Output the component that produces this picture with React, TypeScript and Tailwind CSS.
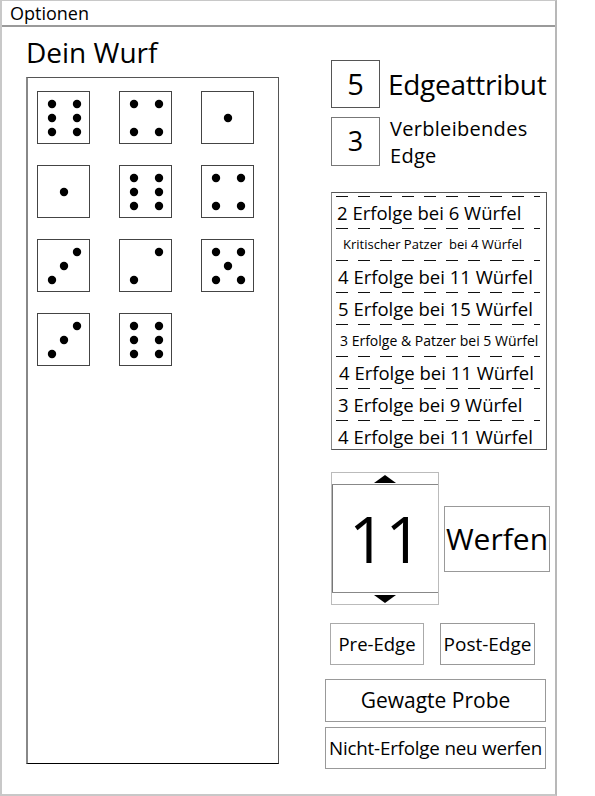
import React from "react";

const FONT = { fontFamily: '"Open Sans", "Noto Sans", sans-serif' };

type Pip = [number, number];

const L = 14;
const M = 26;
const R = 39;
const T = 12;
const B = 40;

const PIPS: Record<number, Pip[]> = {
  1: [[M, M]],
  2: [[L, B], [R, T]],
  3: [[L, B], [M, M], [R, T]],
  4: [[L, T], [R, T], [L, B], [R, B]],
  5: [[L, T], [R, T], [M, M], [L, B], [R, B]],
  6: [[L, T], [R, T], [L, M], [R, M], [L, B], [R, B]],
};

const rolls = [6, 4, 1, 1, 6, 4, 3, 2, 5, 3, 6];

const results = [
  { text: "2 Erfolge bei 6 Würfel", cls: "text-[18.5px] pl-[5px]" },
  { text: "Kritischer Patzer\u00a0 bei 4 Würfel", cls: "text-[13px] pl-[11px]" },
  { text: "4 Erfolge bei 11 Würfel", cls: "text-[18.5px] pl-[6px]" },
  { text: "5 Erfolge bei 15 Würfel", cls: "text-[18.5px] pl-[6px]" },
  { text: "3 Erfolge & Patzer bei 5 Würfel", cls: "text-[14px] pl-[8px]" },
  { text: "4 Erfolge bei 11 Würfel", cls: "text-[18.5px] pl-[7px]" },
  { text: "3 Erfolge bei 9 Würfel", cls: "text-[18.5px] pl-[6px]" },
  { text: "4 Erfolge bei 11 Würfel", cls: "text-[18.5px] pl-[6px]" },
];

function Die({ value }: { value: number }) {
  return (
    <div className="h-[53px] w-[53px] border border-[#444]">
      <svg width="51" height="51" viewBox="0 0 51 51">
        {PIPS[value].map(([x, y], i) => (
          <circle key={i} cx={x} cy={y} r="4.2" fill="#000" />
        ))}
      </svg>
    </div>
  );
}

function Dashes() {
  return (
    <div className="h-px w-full bg-[repeating-linear-gradient(to_right,transparent_0_10px,#111_10px_22px)] bg-[position:-6px_0]" />
  );
}

export default function App() {
  return (
    <div className="bg-white text-black" style={FONT}>
      <div className="flex h-[796px] w-[557px] flex-col border-2 border-t border-[#c8c8c8] border-r-[#b8b8b8]">
        <div className="h-[26px] border-b-2 border-[#9a9a9a] pl-[8px] text-[18px] leading-[25px]">
          Optionen
        </div>

        <div className="flex flex-1">
          <div className="pl-[24px]">
            <div className="mt-[7px] h-[43px] text-[28px] leading-[36px]">Dein Wurf</div>
            <div className="h-[687px] w-[253px] border border-[#555] border-b-black border-l-[#888] border-l-2 pl-[9px] pt-[13px]">
              <div className="grid grid-cols-[repeat(3,53px)] gap-x-[29px] gap-y-[21px]">
                {rolls.map((v, i) => (
                  <Die key={i} value={v} />
                ))}
              </div>
            </div>
          </div>

          <div className="ml-[46px] flex w-[225px] flex-col">
            <div className="ml-[6px] mt-[33px] flex h-[48px] items-center">
              <div className="flex h-[48px] w-[49px] items-center justify-center border border-[#555] text-[29px]">
                5
              </div>
              <span className="ml-[8px] whitespace-nowrap text-[28px] leading-none tracking-[-0.3px]">
                Edgeattribut
              </span>
            </div>

            <div className="ml-[6px] mt-[9px] flex h-[49px] items-center">
              <div className="flex h-[49px] w-[49px] shrink-0 items-center justify-center border border-[#777] text-[27px]">
                3
              </div>
              <div className="ml-[10px] flex flex-col text-[20px] leading-[27px] tracking-[0.3px]">
                <span>Verbleibendes</span>
                <span>Edge</span>
              </div>
            </div>

            <div className="ml-[6px] mt-[26px] h-[258px] w-[216px] border border-[#555] border-l-[#888] pt-[3px]">
              {results.map((r, i) => (
                <div key={i}>
                  <Dashes />
                  <div className={`flex h-[31px] items-center whitespace-nowrap ${r.cls}`}>
                    {r.text}
                  </div>
                </div>
              ))}
            </div>

            <div className="ml-[6px] mt-[22px] flex items-center">
              <div className="flex h-[133px] w-[108px] flex-col border border-[#bbb]">
                <div className="flex h-[12px] items-center justify-center border-b border-[#888]">
                  <div className="h-0 w-0 border-x-[11px] border-b-[8px] border-x-transparent border-b-black" />
                </div>
                <div className="flex flex-1 items-center justify-center border-l border-[#777] text-[64px] leading-none">
                  11
                </div>
                <div className="flex h-[12px] items-center justify-center border-t border-[#888]">
                  <div className="h-0 w-0 border-x-[11px] border-t-[8px] border-x-transparent border-t-black" />
                </div>
              </div>
              <div className="ml-[5px] flex h-[66px] w-[106px] items-center justify-center border border-[#999] text-[30px]">
                Werfen
              </div>
            </div>

            <div className="mt-[18px] flex">
              <div className="ml-[5px] flex h-[42px] w-[94px] items-center justify-center border border-[#aaa] text-[18.5px]">
                Pre-Edge
              </div>
              <div className="ml-[16px] flex h-[42px] w-[95px] items-center justify-center border border-[#999] text-[19px]">
                Post-Edge
              </div>
            </div>

            <div className="mt-[14px] flex h-[43px] w-[221px] items-center justify-center border border-[#999] text-[21px]">
              Gewagte Probe
            </div>
            <div className="mt-[5px] flex h-[42px] w-[221px] items-center justify-center whitespace-nowrap border border-[#999] text-[18.8px] tracking-[-0.2px]">
              Nicht-Erfolge neu werfen
            </div>
          </div>
        </div>
      </div>
    </div>
  );
}
